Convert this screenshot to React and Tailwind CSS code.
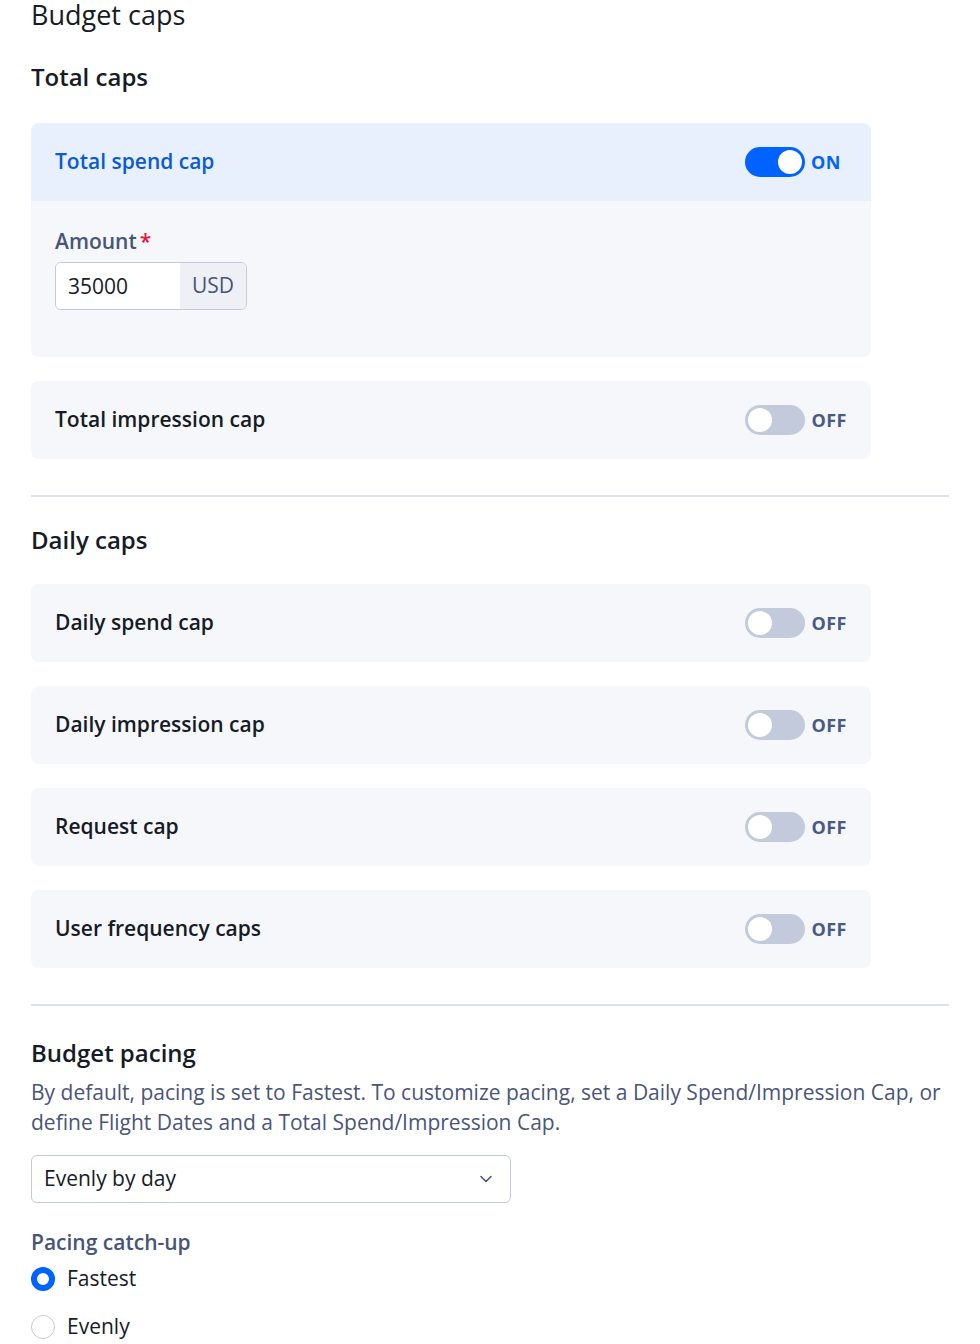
import { useState } from "react";

const Toggle = ({ on, onClick }) => (
  <button onClick={onClick} className="flex items-center gap-[6px]">
    <span
      className={
        "relative w-[60px] h-[30px] rounded-full transition " +
        (on ? "bg-[#0062ff]" : "bg-[#c3cadb]")
      }
    >
      <span
        className={
          "absolute top-[3px] w-[24px] h-[24px] rounded-full bg-white transition-all " +
          (on ? "left-[33px]" : "left-[3px]")
        }
      />
    </span>
    <span
      className={
        "text-[18px] font-bold tracking-[0.5px] " +
        (on ? "text-[#0062ff]" : "text-[#4a5a85]")
      }
    >
      {on ? "ON" : "OFF"}
    </span>
  </button>
);

const CapCard = ({ label }) => {
  const [on, setOn] = useState(false);
  return (
    <div className="w-[840px] h-[78px] bg-[#f5f7fa] rounded-lg flex items-center justify-between pl-6 pr-[24px]">
      <span className="text-[21px] font-semibold text-[#161b26]">{label}</span>
      <Toggle on={on} onClick={() => setOn(!on)} />
    </div>
  );
};

export default function App() {
  const [spendOn, setSpendOn] = useState(true);
  const [catchUp, setCatchUp] = useState("fastest");

  return (
    <div
      className="bg-white min-h-screen pl-[31px] pr-[31px] text-[#161b26]"
      style={{ fontFamily: "'Open Sans', 'Noto Sans', sans-serif" }}
    >
      <h1 className="text-[27px] leading-[40px] font-normal mt-[-5px]">Budget caps</h1>

      {/* TOTAL CAPS */}
      <h2 className="text-[24px] leading-[32px] font-semibold mt-[26px]">Total caps</h2>

      <div className="mt-[30px] w-[840px] rounded-lg overflow-hidden bg-[#f5f7fa]">
        <div className="h-[78px] bg-[#e8f0fe] flex items-center justify-between pl-6 pr-[30px]">
          <span className="text-[21px] font-semibold text-[#0a5ad4]">Total spend cap</span>
          <Toggle on={spendOn} onClick={() => setSpendOn(!spendOn)} />
        </div>
        {spendOn && (
          <div className="px-6 pt-[25px] pb-[47px]">
            <div className="text-[21px] leading-[30px] font-semibold text-[#475578]">
              Amount<span className="text-[#e5173f] ml-[3px]">*</span>
            </div>
            <div className="mt-[6px] flex w-[192px] h-[48px] border border-[#c3cadb] rounded-md overflow-hidden">
              <input
                defaultValue="35000"
                className="w-[124px] h-full bg-white px-3 text-[21px] text-[#161b26] outline-none"
              />
              <span className="flex-1 bg-[#eef0f5] flex items-center justify-center text-[21px] text-[#475578]">
                USD
              </span>
            </div>
          </div>
        )}
      </div>

      <div className="mt-[24px]">
        <CapCard label="Total impression cap" />
      </div>

      <hr className="mt-[36px] border-0 h-[2px] bg-[#dde1ea]" />

      {/* DAILY CAPS */}
      <h2 className="text-[24px] leading-[32px] font-semibold mt-[27px]">Daily caps</h2>

      <div className="mt-[28px] flex flex-col gap-6">
        <CapCard label="Daily spend cap" />
        <CapCard label="Daily impression cap" />
        <CapCard label="Request cap" />
        <CapCard label="User frequency caps" />
      </div>

      <hr className="mt-[36px] border-0 h-[2px] bg-[#dde1ea]" />

      {/* BUDGET PACING */}
      <h2 className="text-[24px] leading-[32px] font-semibold mt-[31px]">Budget pacing</h2>
      <p className="text-[21px] leading-[30px] text-[#4a5578] mt-[8px]">
        By default, pacing is set to Fastest. To customize pacing, set a Daily Spend/Impression Cap, or
        define Flight Dates and a Total Spend/Impression Cap.
      </p>

      <div className="mt-[18px] w-[480px] h-[48px] border border-[#c3cadb] rounded-md flex items-center justify-between pl-3 pr-[16px] bg-white">
        <span className="text-[21px] text-[#161b26]">Evenly by day</span>
        <svg width="16" height="16" viewBox="0 0 16 16" fill="none">
          <path d="M3 5.5l5 5 5-5" stroke="#4a5578" strokeWidth="1.6" strokeLinecap="round" strokeLinejoin="round" />
        </svg>
      </div>

      <div className="mt-[24px] text-[21px] leading-[30px] font-semibold text-[#475578]">Pacing catch-up</div>

      <div className="mt-[7px] flex flex-col gap-[18px]">
        {[
          ["fastest", "Fastest"],
          ["evenly", "Evenly"],
        ].map(([key, label]) => (
          <label key={key} className="flex items-center gap-3 cursor-pointer h-[30px]" onClick={() => setCatchUp(key)}>
            <span
              className={
                "w-[24px] h-[24px] rounded-full bg-white " +
                (catchUp === key ? "border-[6px] border-[#0062ff]" : "border border-[#c3cadb]")
              }
            />
            <span className="text-[21px] text-[#161b26]">{label}</span>
          </label>
        ))}
      </div>
    </div>
  );
}
